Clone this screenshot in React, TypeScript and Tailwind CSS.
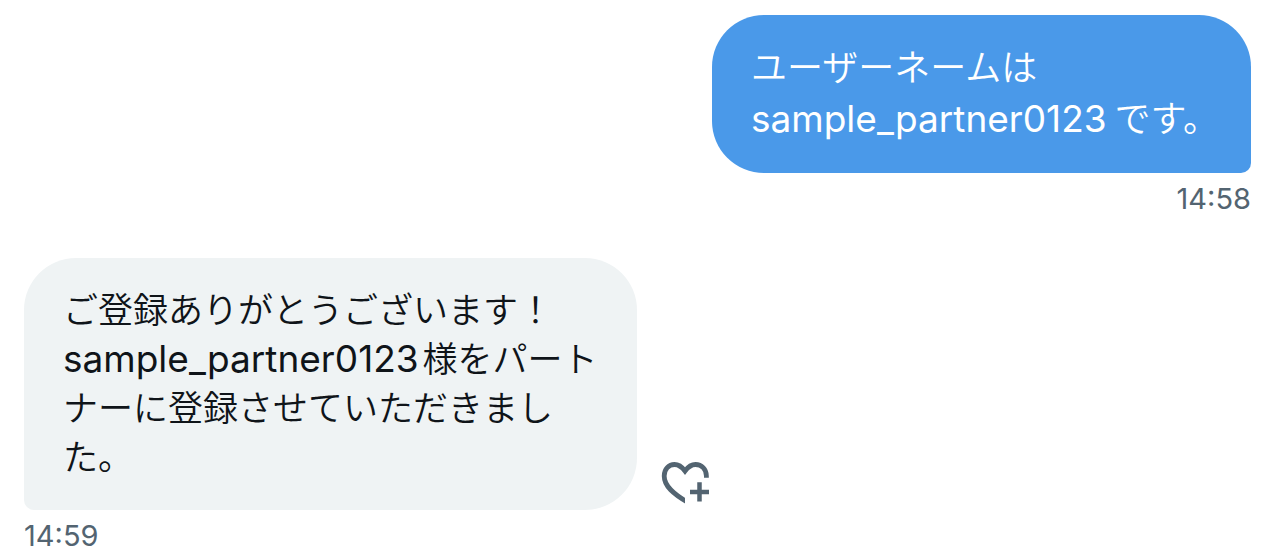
import React from "react";

const base = "font-['Inter','Noto_Sans_CJK_JP',sans-serif]";

function AddReactionIcon() {
  return (
    <svg viewBox="0 0 48 42" className="h-[42px] w-12" fill="none" stroke="#536471" aria-hidden="true">
      <clipPath id="heart-opening">
        <path d="M0 0H48V15.800H24V42H0Z" />
      </clipPath>
      <path
        clipPath="url(#heart-opening)"
        strokeWidth="4.800"
        d="M28 41C12 32 3.200 24 3.200 14C3.200 7 7.800 2.500 13.500 2.500C18 2.500 21 5 24 9C27 5 30 2.500 34.500 2.500C40.500 2.500 45.400 7 45.400 14V20"
      />
      <path strokeWidth="4.500" d="M38.500 20.300V39.500M29 29.900H48" />
    </svg>
  );
}

export default function App() {
  return (
    <main className={`flex flex-col bg-white px-6 pt-[15px] ${base}`}>
      <section className="flex flex-col items-end pr-[5px]">
        <p className="rounded-[52px] rounded-br-[10px] bg-[#4a99e9] py-7 pr-8 pl-[39px] text-[36px] leading-[51px] font-[350] text-white">
          ユーザーネームは
          <br />
          <span className="mr-2 text-[37px] leading-none font-normal">sample_partner0123</span>です。
        </p>
        <time className="mt-3 text-[29px] leading-7 text-[#536471]">14:58</time>
      </section>
      <section className="mt-[45px] flex items-end gap-6">
        <p className="rounded-[52px] rounded-bl-[10px] bg-[#eff3f4] px-[39px] py-7 text-[35px] leading-[49px] font-[350] text-[#0f1419]">
          ご登録ありがとうございます！
          <br />
          <span className="mr-1 text-[37px] leading-none font-normal">sample_partner0123</span>様をパート
          <br />
          ナーに登録させていただきまし
          <br />
          た。
        </p>
        <button type="button" aria-label="リアクションを追加" className="mb-1.5">
          <AddReactionIcon />
        </button>
      </section>
      <time className="mt-3 text-[29px] leading-7 text-[#536471]">14:59</time>
    </main>
  );
}
